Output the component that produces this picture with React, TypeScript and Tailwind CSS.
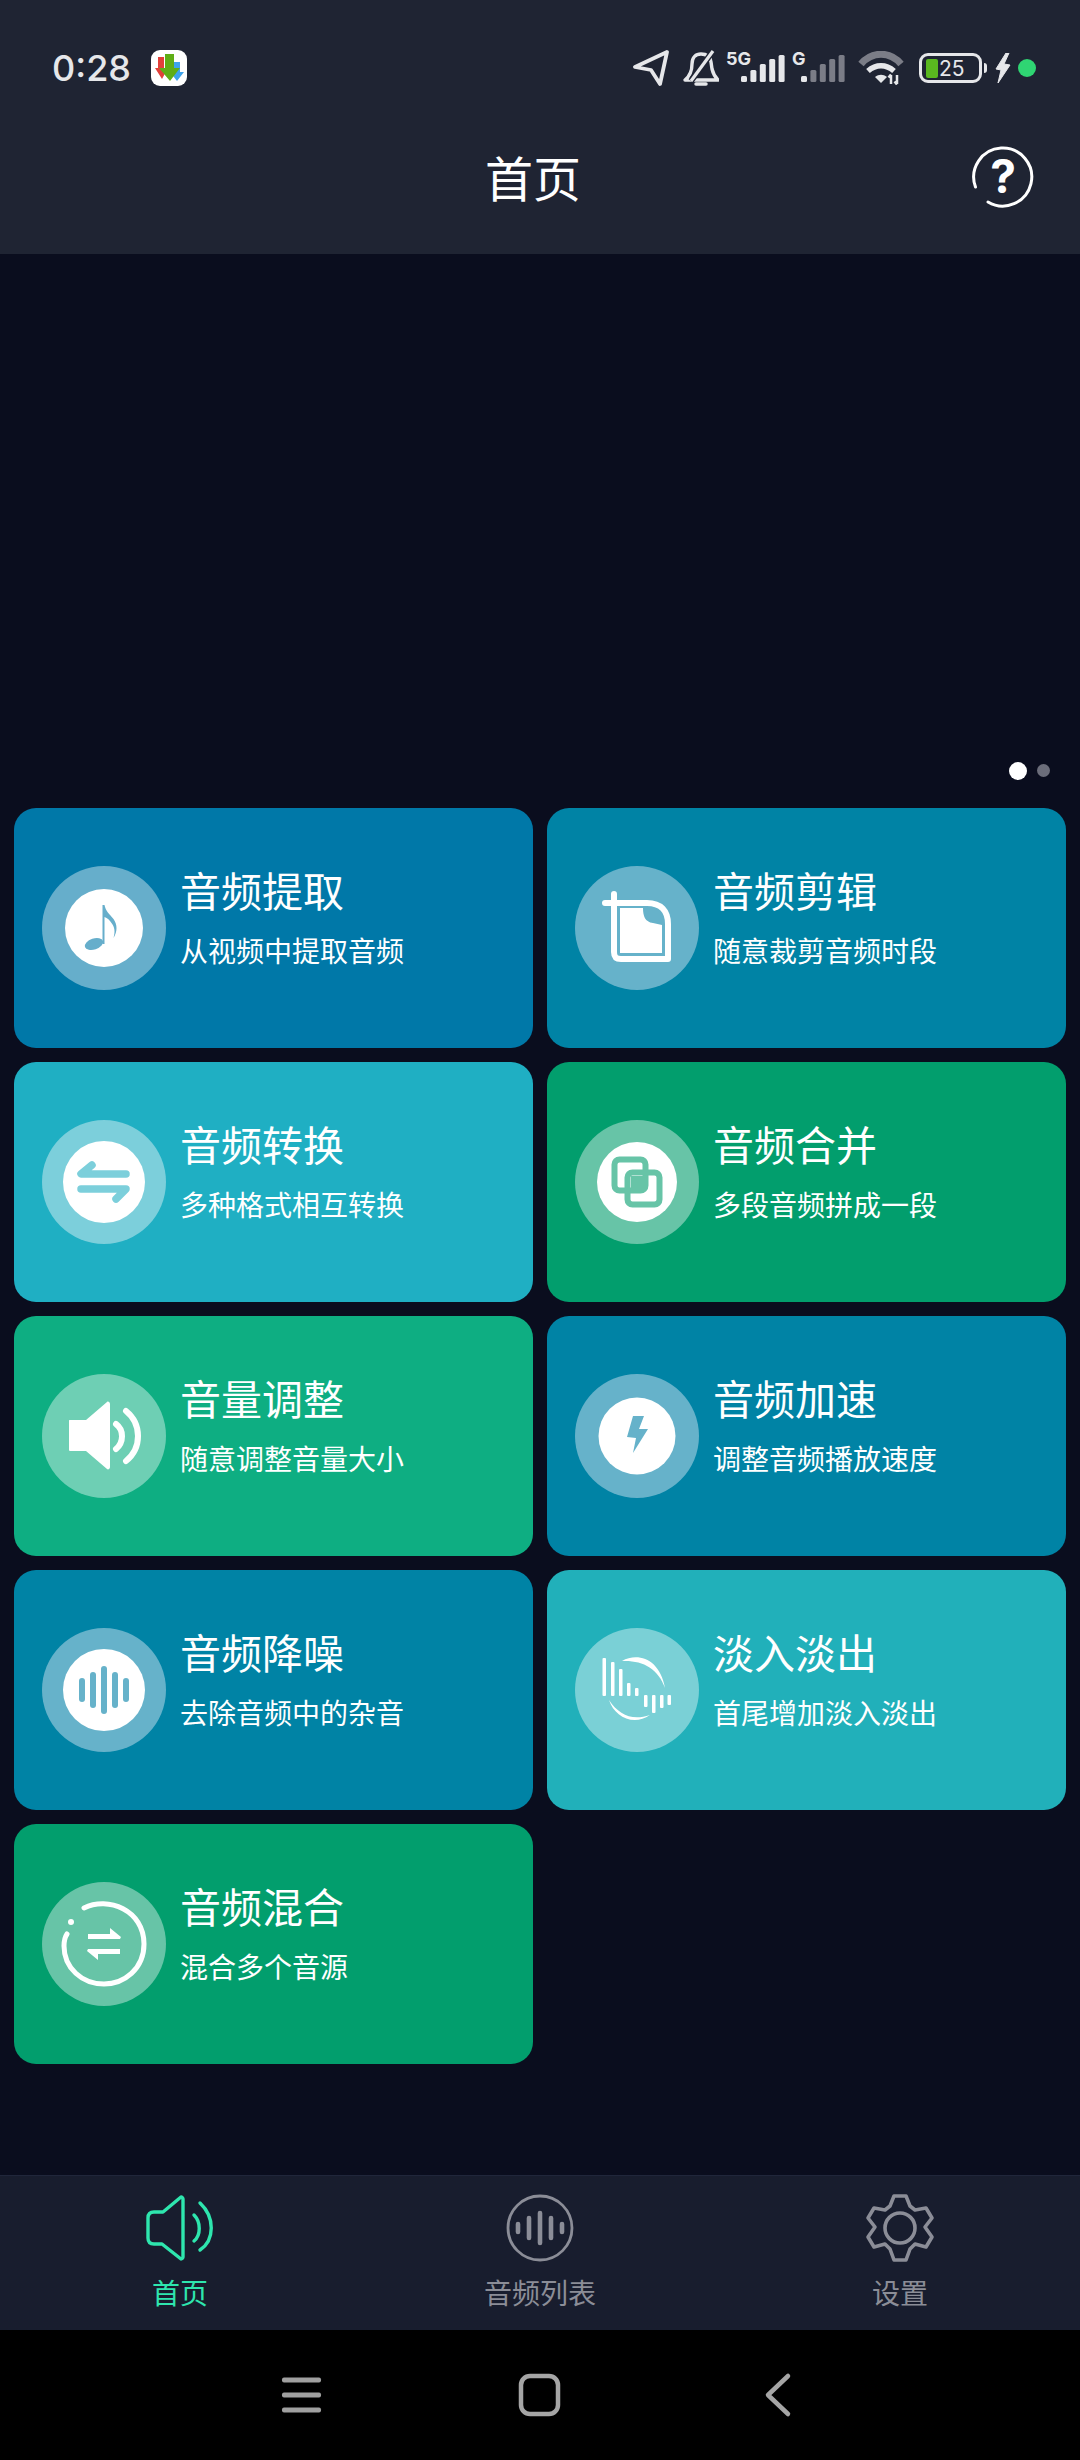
import type { ReactNode } from "react";

interface Tool {
  title: string;
  desc: string;
  bg: string;
  ring: string; // colour of the ring once blended, reused for the cut-out strokes
  icon: (ring: string) => ReactNode;
}

const tools: Tool[] = [
  {
    title: "音频提取",
    desc: "从视频中提取音频",
    bg: "bg-[#0078a8]",
    ring: "#66aecb",
    icon: (c) => (
      <>
        <circle cx="62" cy="62" r="39" fill="#fff" />
        <ellipse cx="52" cy="78" rx="9.5" ry="5.5" fill={c} transform="rotate(-18 52 78)" />
        <path d="M60.5 39h2c1 6 5 9 9 14 4 6 4 12 0 19 2-7 1-11-2-15-2-3-4-5-7-6v27h-2z" fill={c} />
      </>
    ),
  },
  {
    title: "音频剪辑",
    desc: "随意裁剪音频时段",
    bg: "bg-[#0083a5]",
    ring: "#66b2ca",
    icon: () => (
      <>
        <path d="M30 37h42c14 0 21 8 21 21v35H46c-5 0-7-2-7-7V28" fill="none" stroke="#fff" strokeWidth="6" strokeLinecap="round" strokeLinejoin="round" />
        <path d="M45 42h23c0 8 2 14 10 15l9 2v28H45z" fill="#fff" />
      </>
    ),
  },
  {
    title: "音频转换",
    desc: "多种格式相互转换",
    bg: "bg-[#1fafc3]",
    ring: "#7ccfdb",
    icon: (c) => (
      <>
        <circle cx="62" cy="62" r="41" fill="#fff" />
        <path d="M50 45L39 54h45M39 69h45L74 79" fill="none" stroke={c} strokeWidth="7.5" strokeLinecap="round" strokeLinejoin="round" />
      </>
    ),
  },
  {
    title: "音频合并",
    desc: "多段音频拼成一段",
    bg: "bg-[#029e6d]",
    ring: "#67c4a7",
    icon: (c) => (
      <>
        <circle cx="62" cy="62" r="40" fill="#fff" />
        <rect x="39.5" y="39.5" width="31" height="31" rx="5" fill="none" stroke={c} strokeWidth="6" />
        <rect x="52.5" y="52.5" width="32" height="32" rx="5" fill="none" stroke={c} strokeWidth="6" />
        <rect x="56" y="56" width="12" height="12" fill={c} />
      </>
    ),
  },
  {
    title: "音量调整",
    desc: "随意调整音量大小",
    bg: "bg-[#0eae82]",
    ring: "#6ecfb4",
    icon: () => (
      <>
        <path d="M28 46h16l21-18c1-1 3 0 3 2v63c0 2-2 3-3 2L44 77H28c-1 0-1-1-1-1V47c0-1 0-1 1-1z" fill="#fff" />
        <path d="M74 50c8 6 8 18 0 25M84 37c16 13 16 37 0 50" fill="none" stroke="#fff" strokeWidth="6" strokeLinecap="round" />
      </>
    ),
  },
  {
    title: "音频加速",
    desc: "调整音频播放速度",
    bg: "bg-[#0083a5]",
    ring: "#66b2ca",
    icon: (c) => (
      <>
        <circle cx="62" cy="62" r="38.5" fill="#fff" />
        <path d="M58 42h11l-5 13h9L58 79l3-15-9-1z" fill={c} />
      </>
    ),
  },
  {
    title: "音频降噪",
    desc: "去除音频中的杂音",
    bg: "bg-[#0083a5]",
    ring: "#66b2ca",
    icon: (c) => (
      <>
        <circle cx="62" cy="62" r="41" fill="#fff" />
        <rect x="37" y="50" width="6" height="24" rx="3" fill={c} />
        <rect x="48" y="44" width="6" height="36" rx="3" fill={c} />
        <rect x="59" y="38" width="6" height="48" rx="3" fill={c} />
        <rect x="70" y="44" width="6" height="36" rx="3" fill={c} />
        <rect x="81" y="50" width="6" height="24" rx="3" fill={c} />
      </>
    ),
  },
  {
    title: "淡入淡出",
    desc: "首尾增加淡入淡出",
    bg: "bg-[#21b0ba]",
    ring: "#7ad0d6",
    icon: () => (
      <>
        <g fill="#fff">
          <rect x="27.5" y="30" width="3.5" height="38" rx="1" />
          <rect x="36" y="34" width="3.5" height="34" rx="1" />
          <rect x="44" y="41" width="3.5" height="27" rx="1" />
          <rect x="52" y="55" width="3.5" height="13" rx="1" />
          <rect x="60" y="60" width="3.5" height="8" rx="1" />
          <rect x="69" y="67" width="3.5" height="12" rx="1" />
          <rect x="77" y="67" width="3.5" height="18" rx="1" />
          <rect x="85" y="67" width="3.5" height="13" rx="1" />
          <rect x="92.5" y="67" width="3.5" height="10" rx="1" />
          <path d="M47 33c16-9 38-2 43 27-7-20-23-28-43-27z" />
          <path d="M34 72c5 16 24 27 41 15-18 6-31 0-41-15z" />
        </g>
      </>
    ),
  },
  {
    title: "音频混合",
    desc: "混合多个音源",
    bg: "bg-[#029e6d]",
    ring: "#67c4a7",
    icon: () => (
      <>
        <path d="M42 26C66 14 102 28 102 62c0 25-20 40-40 40-22 0-40-16-40-38 0-5 1-9 3-12" fill="none" stroke="#fff" strokeWidth="5" strokeLinecap="round" />
        <circle cx="29" cy="40" r="3" fill="#fff" />
        <path d="M46 52h22v-6l11 9-1 2H46zM78 72H56v6L45 69l1-2h32z" fill="#fff" />
      </>
    ),
  },
];

function ToolCard({ tool }: { tool: Tool }) {
  return (
    <div className={`flex items-center gap-[14px] rounded-[22px] pl-7 ${tool.bg}`}>
      <div className="h-[124px] w-[124px] shrink-0 rounded-full" style={{ background: tool.ring }}>
        <svg width="124" height="124" viewBox="0 0 124 124">
          {tool.icon(tool.ring)}
        </svg>
      </div>
      <div className="flex flex-col gap-[17px] pb-[25px] text-white">
        <div className="text-[41px] leading-[52px]">{tool.title}</div>
        <div className="text-[28px] leading-9">{tool.desc}</div>
      </div>
    </div>
  );
}

function SignalBars({ label, width, active, x }: { label: string; width: number; active: number; x: number }) {
  const heights = [6, 12, 18, 23, 27];
  return (
    <svg width={width} height="42" viewBox={`0 0 ${width} 42`}>
      <text x="0" y="18" fontSize="18" fontWeight="700" fill="#e6e7ea" fontFamily="Inter">
        {label}
      </text>
      {heights.map((h, i) => (
        <rect key={i} x={x + i * 9.4} y={35 - h} width="6" height={h} rx="1.5" fill={i < active ? "#e6e7ea" : "#7b7d87"} />
      ))}
    </svg>
  );
}

function StatusBar() {
  return (
    <div className="flex h-[106px] items-center pl-[52px] pr-[44px] pt-[30px]">
      <span className="font-['Inter'] text-[36px] font-medium leading-none text-[#e6e7ea]">0:28</span>
      {/* app notification icon */}
      <svg className="ml-[20px]" width="36" height="36" viewBox="0 0 36 36">
        <rect width="36" height="36" rx="9" fill="#fff" />
        <path d="M7 7h6v11h4l-6 11-7-11h3z" fill="#e2413a" />
        <path d="M23 12h6v10h4l-7 9-7-9h4z" fill="#3ea3ec" />
        <path d="M14 4h9v14h6L19 31 8 18h6z" fill="#5fae16" />
      </svg>
      <div className="ml-auto flex items-center">
        <svg width="36" height="36" viewBox="0 0 36 36">
          <path d="M34 2L2 17l16 3 9 14z" fill="none" stroke="#e6e7ea" strokeWidth="3.8" strokeLinejoin="round" />
        </svg>
        <svg className="ml-[14px]" width="36" height="38" viewBox="0 0 36 38">
          <path d="M2 31c5-4 7-9 7-16 0-7 4-10 9-10s9 2 10 8l1 7c1 4 3 8 6 11z" fill="none" stroke="#e6e7ea" strokeWidth="3.4" strokeLinejoin="round" />
          <path d="M30 2L8 32" stroke="#1f2433" strokeWidth="6" />
          <path d="M30 2L8 32" stroke="#e6e7ea" strokeWidth="3.2" />
          <path d="M13 35h10" stroke="#e6e7ea" strokeWidth="3.5" strokeLinecap="round" />
        </svg>
        <div className="ml-[7px]">
          <SignalBars label="5G" width={59} active={5} x={15} />
        </div>
        <div className="ml-[7px]">
          <SignalBars label="G" width={53} active={1} x={9} />
        </div>
        <svg className="ml-[13px]" width="46" height="34" viewBox="0 0 46 34">
          <path d="M3 13C14 0 32 0 43 13" fill="none" stroke="#7b7d87" strokeWidth="7" />
          <path d="M10 20c8-7 18-7 26 0" fill="none" stroke="#e6e7ea" strokeWidth="5.5" />
          <path d="M17 26c4-3 8-3 12 0l-6 6z" fill="#e6e7ea" />
          <path d="M33 33v-9m-2.500 2.500l2.500-3M39 24v9m-2.500-2.500l2.500 3" stroke="#e6e7ea" strokeWidth="2.500" fill="none" />
        </svg>
        <div className="ml-[15px] flex items-center">
          <div className="flex h-[30px] w-[63px] items-center rounded-[9px] border-[3px] border-[#e6e7ea] pl-1">
            <div className="h-[19px] w-3 rounded-[2px] bg-[#5ab81f]" />
            <span className="ml-[1px] font-['Inter'] text-[21px] leading-none text-[#e6e7ea]">25</span>
          </div>
          <div className="ml-[2px] h-[10px] w-[3px] rounded-r-sm bg-[#e6e7ea]" />
        </div>
        <svg className="ml-2" width="16" height="30" viewBox="0 0 16 30">
          <path d="M11 0L1 16l5 1-3 13 12-18-6-1 5-11z" fill="#e6e7ea" stroke="#e6e7ea" strokeWidth="1" strokeLinejoin="round" />
        </svg>
        <div className="ml-[7px] h-[18px] w-[18px] rounded-full bg-[#2fd573]" />
      </div>
    </div>
  );
}

function NavSpeaker() {
  return (
    <svg width="100" height="90" viewBox="0 0 100 90" fill="none" stroke="#2ee6ae" strokeWidth="3.4" strokeLinecap="round" strokeLinejoin="round">
      <path d="M51 17L33 32H24c-4 0-6 2-6 6v20c0 4 2 6 6 6h8l19 15c1 0 2-1 2-2V19c0-1-1-2-2-2z" />
      <path d="M64 35c7 7 7 20 0 26M70 23c15 14 15 37 0 47" />
    </svg>
  );
}

function NavWave() {
  return (
    <svg width="100" height="90" viewBox="0 0 100 90" fill="none" stroke="#8b8d97">
      <circle cx="50" cy="48" r="32" strokeWidth="2.8" />
      <g strokeWidth="4.600" strokeLinecap="round">
        <path d="M28 44v8M39 38v20M50 33v30M61 38v20M72 44v8" />
      </g>
    </svg>
  );
}

function NavGear() {
  return (
    <svg width="100" height="90" viewBox="0 0 100 90" fill="none" stroke="#8b8d97" strokeWidth="3.6" strokeLinejoin="round">
      <path d="M44 16h12l4 10 5 4 11-2 6 10-7 9 7 10-6 10-11-3-5 5-4 11H44l-4-11-5-5-11 3-6-10 7-10-7-9 6-10 11 2 5-4z" />
      <circle cx="50" cy="48" r="15" />
    </svg>
  );
}

export default function App() {
  return (
    <div className="flex h-[2460px] w-[1080px] flex-col bg-[#0a0d1e] font-['Noto_Sans_CJK_SC',sans-serif]">
      <header className="h-[254px] shrink-0 bg-[#1f2433]">
        <StatusBar />
        <div className="grid h-[148px] grid-cols-[1fr_auto_1fr] items-center">
          <div />
          <h1 className="pb-2 pr-[14px] text-[48px] font-normal leading-none text-white">首页</h1>
          <svg className="mb-[6px] mr-[46px] justify-self-end" width="62" height="62" viewBox="0 0 62 62">
            <path d="M16 56A29 29 0 1 0 3.500 41" fill="none" stroke="#fff" strokeWidth="3" strokeLinecap="round" />
            <text x="31" y="47" textAnchor="middle" fontSize="46" fontWeight="700" fill="#fff" fontFamily="Inter">
              ?
            </text>
          </svg>
        </div>
      </header>

      <main className="flex min-h-0 flex-1 flex-col">
        {/* banner, empty in the screenshot */}
        <div className="flex h-[554px] items-end justify-end gap-[10px] pb-7 pr-[30px]">
          <div className="h-[18px] w-[18px] rounded-full bg-white" />
          <div className="mb-[3px] h-[13px] w-[13px] rounded-full bg-[#6b6d7a]" />
        </div>
        <div className="grid auto-rows-[240px] grid-cols-2 gap-[14px] px-[14px]">
          {tools.map((tool) => (
            <ToolCard key={tool.title} tool={tool} />
          ))}
        </div>
      </main>

      <nav className="grid h-[155px] shrink-0 grid-cols-3 border-t border-[#20263a] bg-[#181d2e] pt-1">
        <div className="flex flex-col items-center">
          <NavSpeaker />
          <span className="mt-1 text-[28px] leading-9 text-[#2ee6ae]">首页</span>
        </div>
        <div className="flex flex-col items-center">
          <NavWave />
          <span className="mt-1 text-[28px] leading-9 text-[#8b8d97]">音频列表</span>
        </div>
        <div className="flex flex-col items-center">
          <NavGear />
          <span className="mt-1 text-[28px] leading-9 text-[#8b8d97]">设置</span>
        </div>
      </nav>

      {/* android navigation buttons */}
      <div className="flex h-[130px] shrink-0 items-center justify-center bg-black">
        <div className="flex w-[238px] justify-center">
          <svg width="48" height="48" viewBox="0 0 48 48" fill="#a0a0a0">
            <rect x="4" y="6.500" width="39" height="5" rx="2" />
            <rect x="4" y="21.500" width="39" height="5" rx="2" />
            <rect x="4" y="36.500" width="39" height="5" rx="2" />
          </svg>
        </div>
        <div className="flex w-[238px] justify-center">
          <svg width="48" height="48" viewBox="0 0 48 48" fill="none" stroke="#a5a5a5" strokeWidth="4.5">
            <rect x="5" y="5" width="37" height="38" rx="9" />
          </svg>
        </div>
        <div className="flex w-[238px] justify-center">
          <svg width="48" height="48" viewBox="0 0 48 48" fill="none" stroke="#a5a5a5" strokeWidth="4.5" strokeLinecap="round" strokeLinejoin="round">
            <path d="M34 5L14 24l20 19" />
          </svg>
        </div>
      </div>
    </div>
  );
}
